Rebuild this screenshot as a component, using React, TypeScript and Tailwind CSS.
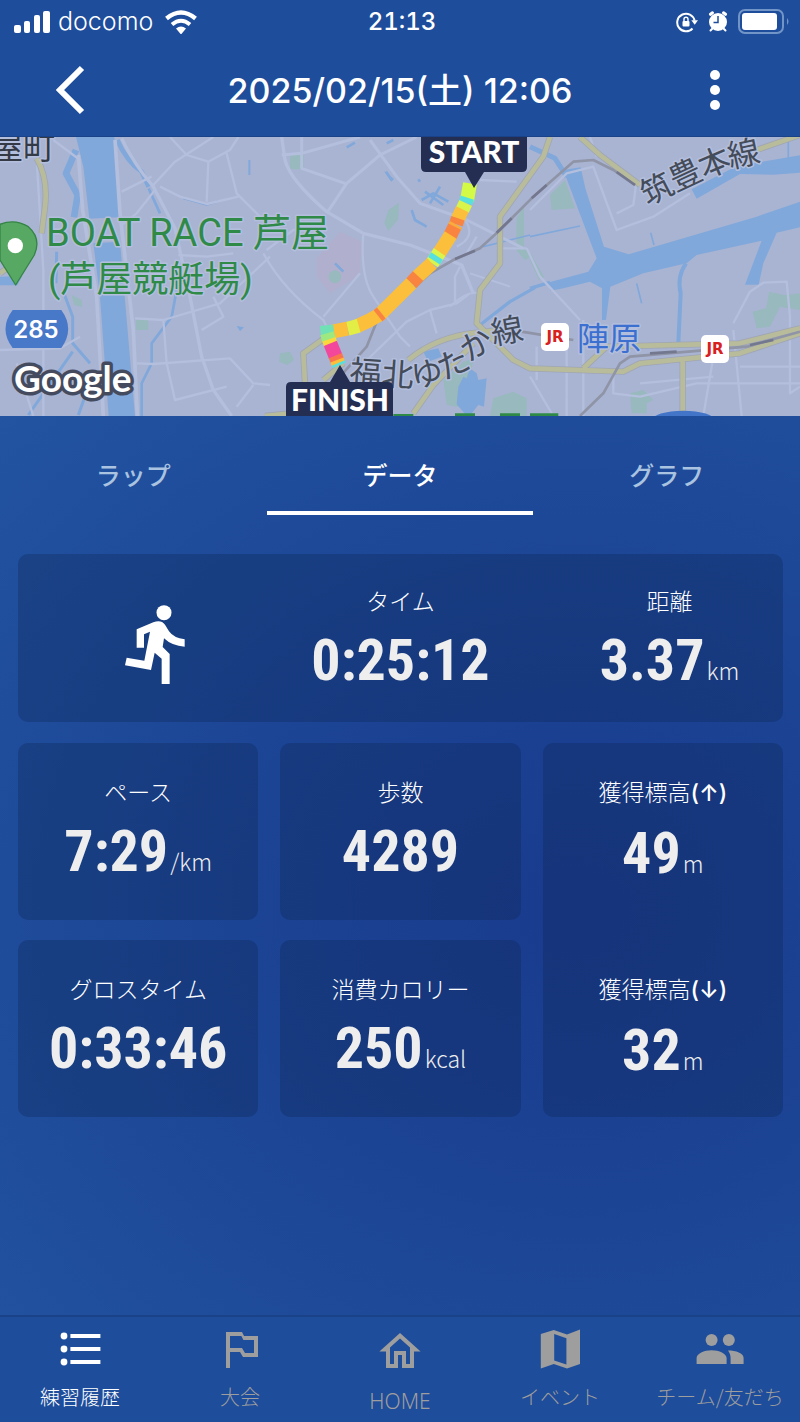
import React, { useState } from 'react';
import clsx from 'clsx';

type IconProps = { className?: string };

const SignalIcon: React.FC<IconProps> = ({ className }) => (
  <svg viewBox="0 0 36 22" className={className} fill="currentColor" aria-hidden="true">
    <rect x="0" y="14" width="7" height="8" rx="2" />
    <rect x="10" y="10" width="6" height="12" rx="2" />
    <rect x="20" y="4" width="6" height="18" rx="2" />
    <rect x="29" y="0" width="7" height="22" rx="2" />
  </svg>
);

const WifiIcon: React.FC<IconProps> = ({ className }) => (
  <svg viewBox="0 0 32 24" className={className} fill="none" stroke="currentColor" strokeWidth="4.4" aria-hidden="true">
    <path d="M1.500 8.500Q16 -3.500 30.500 8.500" />
    <path d="M7 14.500Q16 7 25 14.500" strokeWidth="4" />
    <path d="M11 18.500Q16 14.500 21 18.500L16 24.500z" fill="currentColor" stroke="none" />
  </svg>
);

const RotationLockIcon: React.FC<IconProps> = ({ className }) => (
  <svg viewBox="0 0 22 22" className={className} fill="none" stroke="currentColor" strokeWidth="2" aria-hidden="true">
    <path d="M16.500 17.500A8.800 8.800 0 1 1 18.600 9.500" />
    <path d="M15.300 9.200h6.700l-3.300 4.600z" fill="currentColor" stroke="none" />
    <rect x="6.500" y="10" width="7" height="5.500" rx="1" fill="currentColor" stroke="none" />
    <path d="M8 10.500V8.300a2 2 0 0 1 4 0v2.200" strokeWidth="1.400" />
  </svg>
);

const AlarmIcon: React.FC<IconProps> = ({ className }) => (
  <svg viewBox="0 0 20 22" className={className} aria-hidden="true">
    <g stroke="currentColor" strokeWidth="3" strokeLinecap="round">
      <path d="M2.500 3.300l2-1.500M17.500 3.300l-2-1.500" />
      <path d="M4.500 17.500l-2 2M15.500 17.500l2 2" strokeWidth="2" />
    </g>
    <circle cx="10" cy="11" r="9" fill="currentColor" />
    <path d="M10 5v6.500H5.500" fill="none" stroke="#1e4d9b" strokeWidth="1.500" />
  </svg>
);

const BatteryIcon: React.FC<IconProps> = ({ className }) => (
  <svg viewBox="0 0 52 26" className={className} aria-hidden="true">
    <rect x="1" y="1" width="44" height="23" rx="6" fill="none" stroke="#7295c8" strokeWidth="2" />
    <rect x="4" y="4" width="35" height="17" rx="3" fill="#fff" />
    <path d="M49 9q3 3.500 0 7z" fill="#7295c8" />
  </svg>
);

const RunnerIcon: React.FC<IconProps> = ({ className }) => (
  <svg viewBox="370 522 180 240" className={className} fill="currentColor" aria-hidden="true">
    <circle cx="487" cy="548" r="22.500" />
    <path d="M405 598L455 577Q478 568 490 584L502 604Q516 624 549 628V650Q511 648 487 625L483 651L504 672V762H480V686L459 668L448 720L370 706L375 683L428 692L445 605L427 613V653H405z" />
  </svg>
);

const ListIcon = () => (
  <svg viewBox="0 0 24 24" className="size-12" fill="currentColor" aria-hidden="true">
    <circle cx="4" cy="5.500" r="1.700" />
    <circle cx="4" cy="12" r="1.700" />
    <circle cx="4" cy="18.500" r="1.700" />
    <path d="M7.200 4.500h15v2h-15zM7.200 11h15v2h-15zM7.200 17.500h15v2h-15z" />
  </svg>
);

const FlagIcon = () => (
  <svg viewBox="0 0 24 24" className="size-12" fill="currentColor" aria-hidden="true">
    <path d="M13 3.500H5v18h2v-8h5l1.500 2.500h7.500V5.500H14zm6 10.500H14.500L13 11.500H7V5.500h5.700l1 2H19z" />
  </svg>
);

const HomeIcon = () => (
  <svg viewBox="0 0 24 24" className="size-12" fill="currentColor" aria-hidden="true">
    <path d="M12 6.700l5 4.500V19.500h-2V13H9v6.500H7v-8.300zM12 4L1.700 13.300H5v8.200h6V15h2v6.500h6v-8.200h3.300z" />
  </svg>
);

const MapIcon = () => (
  <svg viewBox="0 0 24 24" className="size-12" fill="currentColor" aria-hidden="true">
    <path d="M2.400 4.500L8.900 2.500L15.500 4.800L22 2.300V19.500L15.500 21.800L8.900 19.500L2.400 21.800zM9.100 4.500V17.700L15.200 19.700V6.600z" fillRule="evenodd" />
  </svg>
);

const PeopleIcon = () => (
  <svg viewBox="0 0 24 24" className="size-12" fill="currentColor" aria-hidden="true">
    <circle cx="7.800" cy="7.500" r="3" />
    <circle cx="16.400" cy="7.500" r="3" />
    <path d="M.3 19.500V16.500C.3 14.300 4 12.600 7.800 12.600S15.300 14.300 15.300 16.500V19.500zM16 12.700C20 12.700 23.800 14 23.800 16.500V19.500H17.300V16.500C17.300 15 16.800 13.800 16 12.700z" />
  </svg>
);

const JrBadge: React.FC<{ x: number; y: number }> = ({ x, y }) => (
  <g transform={`translate(${x} ${y})`}>
    <rect width="28" height="28" rx="5" fill="#fff" />
    <text x="14" y="19" textAnchor="middle" fontSize="15" fontWeight="700" fill="#d8211d" className="font-['DejaVu_Sans']">
      JR
    </text>
  </g>
);

// stretches of the run, coloured by speed
const track = [
  { d: 'M1410 160L1401 212', color: '#d3fb45' },
  { d: 'M1402 203L1397 219', color: '#58e0dd' },
  { d: 'M1397 219L1387 240', color: '#d9f44a' },
  { d: 'M1387 238L1373 268', color: '#fbbf3b' },
  { d: 'M1374 265L1368 283', color: '#f98440' },
  { d: 'M1368 283L1363 292', color: '#fbab3c' },
  { d: 'M1364 290L1350 318', color: '#f98440' },
  { d: 'M1352 315L1317 370', color: '#fbbf3b' },
  { d: 'M1319 366L1296 400', color: '#d9f44a' },
  { d: 'M1311 378L1302 392', color: '#58e0dd' },
  { d: 'M1296 400L1252 440', color: '#fbbf3b' },
  { d: 'M1254 438L1234 460', color: '#f98440' },
  { d: 'M1234 460L1140 553Q1110 572 1072 588', color: '#fbbf3b' },
  { d: 'M1144 549L1134 557', color: '#f98440' },
  { d: 'M1076 587L1043 596', color: '#e2ee45' },
  { d: 'M1043 596L1000 604', color: '#fbbf3b' },
  { d: 'M1002 604L962 609', color: '#70e0b5' },
  { d: 'M981 610L987 630', color: '#9de880' },
  { d: 'M987 628L992 643', color: '#fbd93d' },
  { d: 'M991 640L1007 680', color: '#f2479b' },
  { d: 'M1006 677L1012 692', color: '#f9754c' },
  { d: 'M1011 690L1015 701', color: '#fbbf3b' },
  { d: 'M1015 699L1018 706', color: '#58e0dd' },
];

const mainRoads =
  'M110 85Q145 145 135 230L125 310M0 430L70 380M1740 21L1800 75L1920 165M1650 21L1630 80L1500 260L1500 400L1440 480L1430 580L1540 690L1590 715L1870 725L1920 700L2220 670L2400 610M1225 690Q1310 620 1430 608L1500 600M980 620L910 670L915 760M1240 850L1300 765L1420 640M1750 715L1820 650L2220 640L2400 595M2048 690V858M970 750L1030 700M795 858L870 850M2270 60L2400 15';

const RouteMap = () => (
  <svg
    viewBox="0 0 800 279"
    preserveAspectRatio="xMidYMid slice"
    className="block h-[279px] w-full bg-[#a9b4d3]"
    role="img"
    aria-label="ルートマップ"
  >
    <g transform="translate(0 -7) scale(0.33333)" fill="none" strokeLinejoin="round">
      {/* parks and ground */}
      <g fill="#98b9bd">
        <path d="M215 495l30 15 2 22-25-8zM408 570h37v30h-37zM870 73h42v45h-42zM1165 240l32-22-2 50-30 35-12-25zM840 670l30-5 12 25-20 15-25-10zM1650 195l45-45 30 85-70 5zM1592 370l40 70-15 10-27-60zM2258 545l40-10 10-50 45 10 47-5v50l-60-10-30 60-40 5zM1890 790l40-10 30 30-20 10v30h-45zM1330 750l60-55 30-10-20 150-60-10zM1480 805l60-20 40 20v53h-110zM1550 265l22-35v120l22 30-20 10-25-30z" />
      </g>
      <path d="M950 385l70-80 65 30-5 100-90 55-40-50z" fill="#b0b0ce" />
      <circle cx="1005" cy="440" r="19" fill="#98b9bd" />

      {/* rivers and harbour */}
      <g fill="#81a8da">
        <path d="M228 21H343L357 262L268 266L250 110zM280 340L360 335L405 858H326L300 500z" />
        <path d="M1690 120L1742 112L1756 175L1812 350L1886 373L2270 260L2400 215V292L2330 308L2290 400L2276 464H2235L2285 332L2090 375L2060 400L1930 430L1831 470L1818 570H1806V475L1770 455L1690 475L1652 482L1642 458L1765 425L1790 385z" />
        <path d="M2075 178L2210 108L2400 76V128L2320 134L2220 132L2090 206z" />
        <path d="M1375 770l15-30 10 5 10-30 20 15 5 20 25-5-8 85-17-5-30 38-35-40zM1270 665l45-10 10 25-40 15zM710 588l22 4-12 12zM0 440l67-2-15 28H0z" />
        <path d="M1152 122l30 25-8 8z" />
      </g>
      <g stroke="#81a8da" strokeWidth="14">
        <path d="M228 60L198 130L233 195L222 262" strokeWidth="20" />
        <path d="M352 30Q380 95 425 125L446 170" />
        <path d="M446 175L480 250" strokeWidth="8" />
        <path d="M192 490L218 560V640L270 700M218 665L85 855M262 780L235 855M170 365L168 460" strokeWidth="9" />
        <path d="M530 480L515 560L455 640V700L425 760V858" strokeWidth="8" />
        <path d="M748 90V135M550 205L620 224L655 214" strokeWidth="6" />
        <path d="M1590 50L1665 85L1700 140" strokeWidth="15" />
        <path d="M1590 475L1650 457M1440 585L1530 515L1605 473" strokeWidth="10" />
        <path d="M2058 400Q2030 440 2042 490L2035 640" strokeWidth="12" />
        <path d="M1910 460L1925 520M1952 308L1962 345M1590 320L1740 288M1450 350L1590 315M2365 35V85" strokeWidth="5" />
        <path d="M1235 240L1245 270L1280 290M1275 185L1330 225M1320 170L1290 220M1265 210L1300 190L1345 215M1158 125L1175 150M1005 400L1030 425M1040 52L1065 38M1160 40L1180 30M1255 148L1260 155" strokeWidth="8" />
      </g>

      {/* local roads */}
      <g stroke="#b4bedd" strokeWidth="7">
        <path d="M235 75L248 240L290 500L310 858M345 30L360 250L400 600L412 858" strokeWidth="11" />
        <path d="M160 30L240 90M110 90L130 420V858M50 700L100 858M0 660L180 655L240 620" />
        <path d="M365 25Q400 100 460 170L525 295L570 500L605 680L640 780L695 858" strokeWidth="10" />
        <path d="M460 165L525 95L640 21M510 21L560 75L625 95L690 60L715 21M625 95L620 215M480 170L540 200L620 222L715 200M680 70L710 190L790 270M365 185L455 140M465 180L410 250L365 285" />
        <path d="M405 565L490 570L660 520L810 380M410 700L460 702L690 685L760 760L810 765M490 570L500 700L525 810L680 770M535 375L620 380L700 370M640 500L670 560L605 600M760 765L710 830" />
        <path d="M845 21L855 90Q870 150 980 245L1090 310L1230 345L1385 405L1420 490" strokeWidth="10" />
        <path d="M845 75L905 70L1080 21M905 21V115L1035 160M980 250L1040 160L1140 75L1250 21M1110 30L1190 140L1260 220L1400 270L1500 320L1570 355" strokeWidth="9" />
        <path d="M790 370Q850 480 970 570L980 590M1090 310Q1080 440 1120 500L1200 620L1230 650M970 560L1080 430M1070 720L1220 575L1290 540L1370 520L1410 490M1380 410L1365 440V520M1290 540L1310 610M800 360L880 300L980 300" />
        <path d="M1395 270Q1430 320 1370 350M1430 320L1400 370M1580 355L1620 440L1740 570M1580 355H1490M1440 150L1550 155M1590 240L1700 130L1780 110L1850 300L1960 260L2070 190M1850 250L1900 225L1910 150M1770 21L1790 80" />
        <path d="M1700 620V858M1750 570V858M1590 740L1660 858M1610 650V750M2200 580L2250 485L2290 458L2360 455L2370 560V790L2400 770M2200 600L2225 858M2140 680L2110 858M1840 720V790L1920 800L2090 760H2400M1920 760L2140 740M2220 710H2400" />
        <path d="M1410 430L1530 470M1350 530Q1400 480 1440 490" strokeWidth="6" />
      </g>

      {/* main roads */}
      <path d={mainRoads} stroke="#9fa6b3" strokeWidth="19" />
      <path d={mainRoads} stroke="#b9bc9a" strokeWidth="14" />

      {/* railway */}
      <g stroke="#8f94a6" strokeWidth="8">
        <path d="M1020 740L1100 650L1130 575L1290 430L1360 390L1440 355L1500 300L1600 200L1720 95L1780 90L1840 120L1905 165" />
        <path d="M1740 858L1810 790L1860 700L1890 680L2100 662L2240 650L2400 605M1565 605L1720 630" />
        <path d="M1365 387L1425 362M1490 308L1535 265M1595 205L1640 165M1850 126L1905 165M1950 670L2030 665M2250 645L2320 630" stroke="#73788f" />
      </g>

      {/* route */}
      <g strokeWidth="42" strokeLinejoin="miter">
        {track.map((segment) => (
          <path key={segment.d} d={segment.d} stroke={segment.color} />
        ))}
      </g>
      <ellipse cx="2050" cy="872" rx="95" ry="30" fill="#4274c8" />
      <path d="M1180 852h60v6h-60zM1590 850h85v8h-85zM1365 850h60v8h-60zM1500 850h60v8h-60z" fill="#2f8a48" />
      <path d="M0 283Q45 265 85 290Q125 325 103 375L47 465L0 390z" fill="#57a863" stroke="#358447" strokeWidth="4" />
      <circle cx="46" cy="347" r="23" fill="#fff" />
      <path d="M38 540H184Q225 597 184 654H38Q-5 597 38 540z" fill="#4878c8" />
    </g>

    {/* place names */}
    <g className="font-['Roboto','Noto_Sans_CJK_JP',sans-serif]" stroke="#b3bfdd" strokeWidth="3" paintOrder="stroke" strokeLinejoin="round">
      <text x="-9" y="22" fontSize="32" fill="#343a45">屋町</text>
      <text x="46" y="109" fontSize="38" fill="#2f8a48">BOAT RACE 芦屋</text>
      <text x="48" y="155" fontSize="36" fill="#2f8a48">(芦屋競艇場)</text>
      <text x="577" y="213" fontSize="32" fill="#3b6fd0">陣原</text>
      <g fill="#444b59" fontSize="32" textAnchor="middle">
        <text transform="translate(365 247) rotate(4)">福</text>
        <text transform="translate(397 249) rotate(4)">北</text>
        <text transform="translate(429 248) rotate(-10)">ゆ</text>
        <text transform="translate(458 237) rotate(-25)">た</text>
        <text transform="translate(482 217) rotate(-32)">か</text>
        <text transform="translate(509 205) rotate(-10)">線</text>
        <text transform="translate(662 62) rotate(-27)">筑</text>
        <text transform="translate(690 48) rotate(-25)">豊</text>
        <text transform="translate(719 36) rotate(-23)">本</text>
        <text transform="translate(746 28) rotate(-12)">線</text>
      </g>
    </g>
    <text x="36" y="201" fontSize="24" fontWeight="600" fill="#fff" textAnchor="middle" className="font-['Inter']">
      285
    </text>
    <text
      x="14"
      y="255"
      fontSize="37"
      fontWeight="700"
      fill="#fff"
      stroke="#444b5e"
      strokeWidth="7"
      paintOrder="stroke"
      strokeLinejoin="round"
      className="font-['Lato']"
    >
      Google
    </text>
    <JrBadge x={541} y={186} />
    <JrBadge x={701} y={198} />

    {/* start and finish flags */}
    <g fill="#232e52">
      <path d="M421 -5H527V30Q527 35 522 35H484L474 51L465 35H426Q421 35 421 30z" />
      <path d="M286 284V250Q286 245 291 245H330L340 228L350 245H388Q393 245 393 250V284z" />
    </g>
    <g fill="#fff" fontSize="30" fontWeight="900" textAnchor="middle" className="font-['Lato']">
      <text x="474" y="26">START</text>
      <text x="340" y="274">FINISH</text>
    </g>
  </svg>
);

interface MetricProps {
  label: string;
  arrow?: string;
  value: string;
  unit?: string;
  className?: string;
}

const Metric: React.FC<MetricProps> = ({ label, arrow, value, unit, className }) => (
  <div className={clsx('text-center', className)}>
    <div className="text-[23px] leading-8 font-light text-white">
      {label}
      {arrow && <span className="font-['Inter',sans-serif] font-medium">({arrow})</span>}
    </div>
    <div className="mt-3.5 text-[#eeeeee]">
      <span className="font-['Roboto_Condensed','Liberation_Sans_Narrow','Roboto',sans-serif] text-[58px] leading-[60px] font-bold">
        {value}
      </span>
      {unit && <span className="ml-0.5 text-[23px] leading-8 font-light">{unit}</span>}
    </div>
  </div>
);

const tabs = ['ラップ', 'データ', 'グラフ'];

const navItems = [
  { label: '練習履歴', icon: <ListIcon />, active: true },
  { label: '大会', icon: <FlagIcon /> },
  { label: 'HOME', icon: <HomeIcon />, low: true },
  { label: 'イベント', icon: <MapIcon /> },
  { label: 'チーム/友だち', icon: <PeopleIcon /> },
];

const App: React.FC = () => {
  const [activeTab, setActiveTab] = useState('データ');

  return (
    <div className="flex min-h-screen flex-col bg-[#1e4d9b] font-['Noto_Sans_CJK_JP',sans-serif] text-white">
      <div className="grid h-11 grid-cols-3 items-center pr-2.5 pl-3.5 font-['Inter',sans-serif]">
        <div className="flex items-center gap-2">
          <SignalIcon className="h-[22px] w-9" />
          <span className="text-[25px] font-light">docomo</span>
          <WifiIcon className="ml-1 h-6 w-8" />
        </div>
        <span className="text-center text-2xl font-medium tabular-nums">21:13</span>
        <div className="flex items-center justify-end gap-2.5">
          <RotationLockIcon className="size-[22px]" />
          <AlarmIcon className="h-[22px] w-5" />
          <BatteryIcon className="h-[26px] w-[52px]" />
        </div>
      </div>

      <header className="grid h-[93px] grid-cols-[140px_1fr_140px] items-center border-b border-[#1a4288]">
        <button type="button" aria-label="戻る" className="flex h-12 items-center justify-center">
          <svg viewBox="0 0 30 50" className="h-[50px] w-[30px]" fill="none" stroke="currentColor" strokeWidth="6">
            <path d="M27 3L5 25L27 47" />
          </svg>
        </button>
        <h1 className="pt-0.5 text-center font-['Inter','Noto_Sans_CJK_JP',sans-serif] text-[34px] leading-10 font-medium">
          2025/02/15(土) 12:06
        </h1>
        <button type="button" aria-label="メニュー" className="flex h-12 w-[110px] items-center justify-center">
          <svg viewBox="0 0 10 40" className="h-10 w-2.5" fill="currentColor">
            <circle cx="5" cy="5" r="5" />
            <circle cx="5" cy="20" r="5" />
            <circle cx="5" cy="35" r="5" />
          </svg>
        </button>
      </header>

      <RouteMap />

      <main className="flex-1 bg-[radial-gradient(ellipse_at_72%_55%,#193b8e_0%,#1b4192_30%,#1e4a99_65%,#2254a1_100%)]">
        <div role="tablist" className="grid grid-cols-3 pt-[19px]">
          {tabs.map((tab) => (
            <button
              key={tab}
              type="button"
              role="tab"
              aria-selected={activeTab === tab}
              onClick={() => setActiveTab(tab)}
              className={clsx(
                'h-20 border-b-4 pt-1 text-[25px] font-medium',
                activeTab === tab ? 'border-white text-white' : 'border-transparent text-[#a9c3e0]'
              )}
            >
              {tab}
            </button>
          ))}
        </div>

        <div className="mt-[39px] pr-[17px] pl-[18px]">
          <div className="grid h-[168px] grid-cols-3 rounded-[10px] bg-[#0c2350]/30">
            <div className="flex items-center justify-center pt-3 pl-[18px]">
              <RunnerIcon className="h-20 w-[60px]" />
            </div>
            <Metric label="タイム" value="0:25:12" className="pt-[30px]" />
            <Metric label="距離" value="3.37" unit="km" className="pt-[30px] pl-7" />
          </div>

          <div className="mt-[21px] grid auto-rows-[177px] grid-cols-3 gap-x-[22px] gap-y-5">
            <Metric label="ペース" value="7:29" unit="/km" className="rounded-[10px] bg-[#0c2350]/30 pt-8" />
            <Metric label="歩数" value="4289" className="rounded-[10px] bg-[#0c2350]/30 pt-8" />
            <div className="row-span-2 grid grid-rows-2 gap-y-5 rounded-[10px] bg-[#0c2350]/30">
              <Metric label="獲得標高" arrow="↑" value="49" unit="m" className="pt-8" />
              <Metric label="獲得標高" arrow="↓" value="32" unit="m" className="pt-8" />
            </div>
            <Metric label="グロスタイム" value="0:33:46" className="rounded-[10px] bg-[#0c2350]/30 pt-8" />
            <Metric label="消費カロリー" value="250" unit="kcal" className="rounded-[10px] bg-[#0c2350]/30 pt-8" />
          </div>
        </div>
      </main>

      <nav className="grid h-[107px] grid-cols-5 border-t-2 border-[#1a4288] pt-2">
        {navItems.map((item) => (
          <a
            key={item.label}
            href="#"
            className={clsx(
              'flex flex-col items-center leading-8 font-light whitespace-nowrap',
              item.low ? "font-['Noto_Sans',sans-serif] text-[21px]" : 'text-xl',
              item.active ? 'text-white' : 'text-[#9e9e9e]'
            )}
          >
            {item.icon}
            <span className={clsx(item.low ? 'mt-3' : 'mt-2')}>{item.label}</span>
          </a>
        ))}
      </nav>
    </div>
  );
};

export default App;
